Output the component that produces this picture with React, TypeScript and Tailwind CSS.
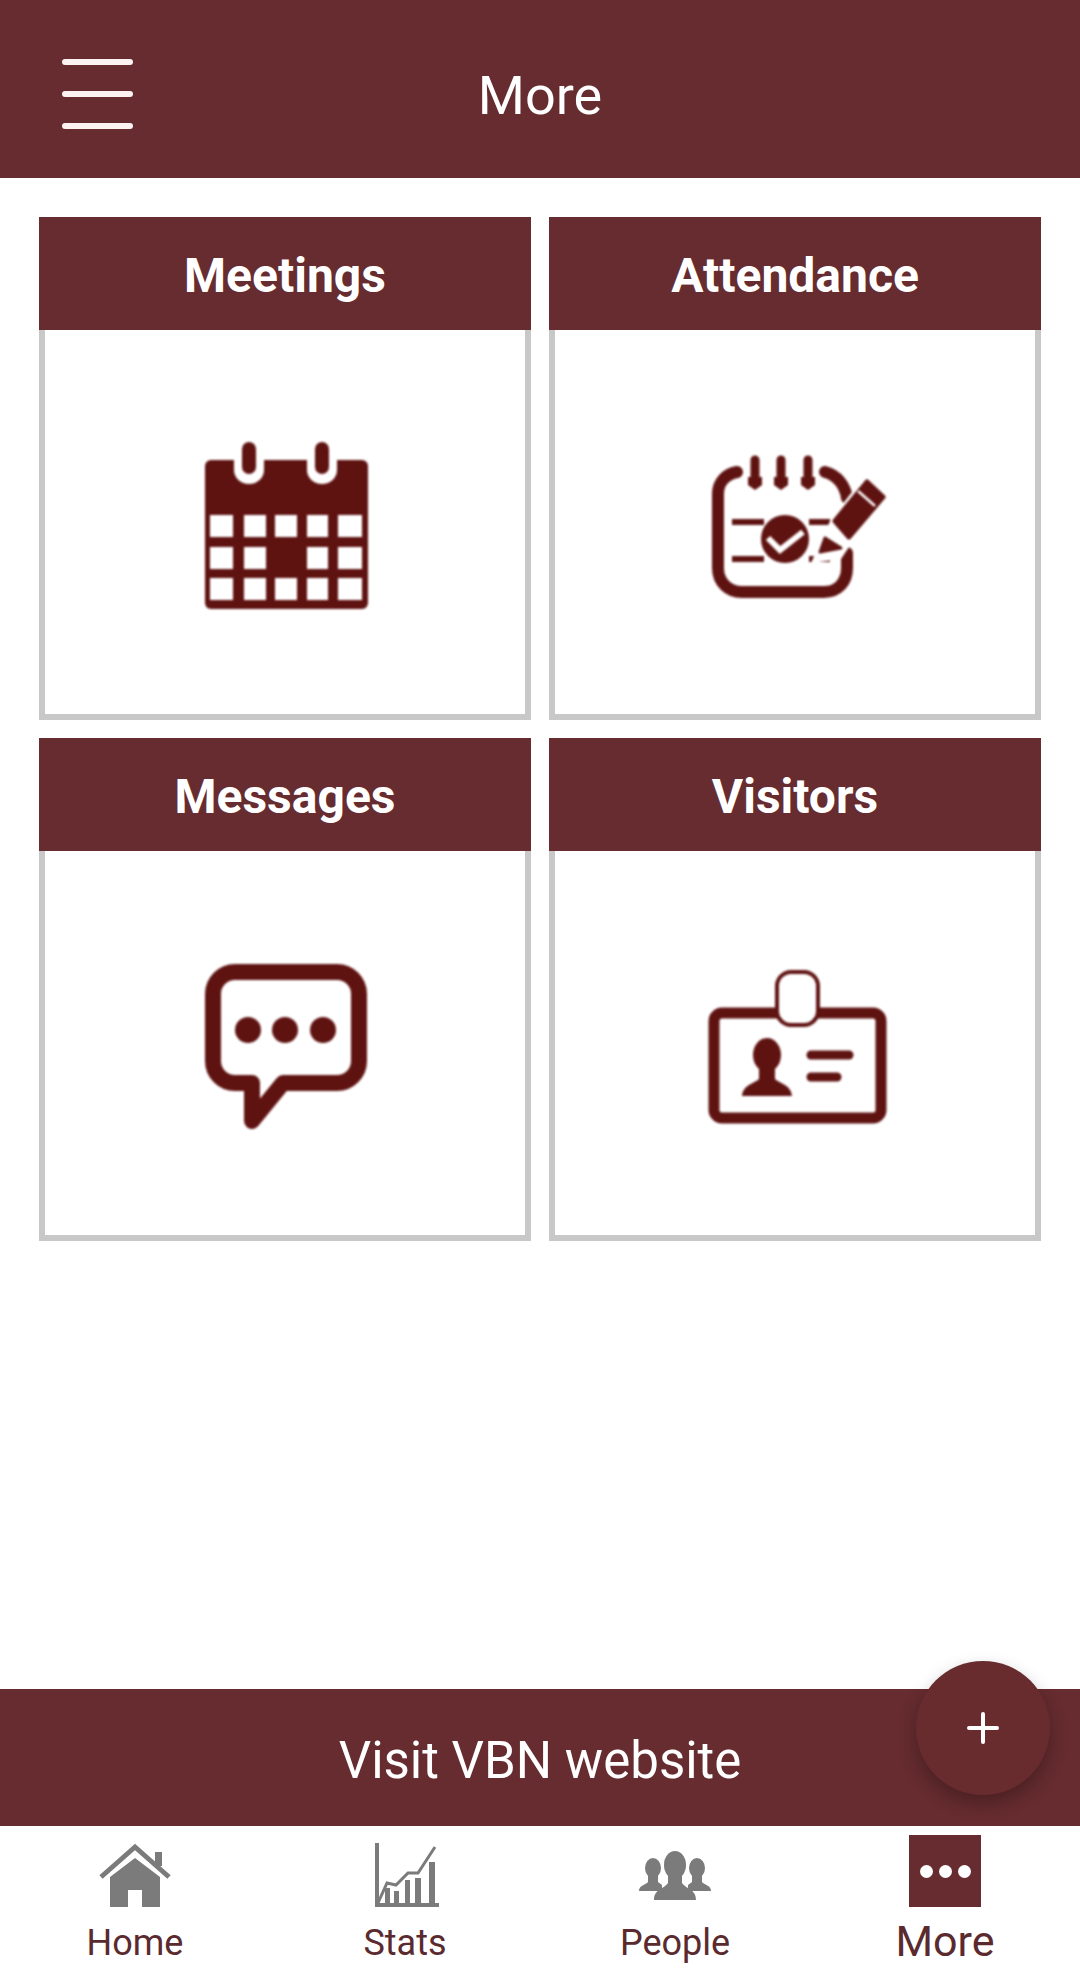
import type { ReactNode } from "react";

function CalendarIcon() {
  const rows = [103, 135, 166];
  const cols: [number, number][] = [
    [35, 23],
    [69, 22],
    [100, 22],
    [132, 21],
    [163, 24],
  ];
  return (
    <svg viewBox="0 0 220 220" className="h-[220px] w-[220px] blur-[1px]">
      <path d="M36 48H187a6 6 0 0 1 6 6V191a6 6 0 0 1-6 6H36a6 6 0 0 1-6-6V54a6 6 0 0 1 6-6Z" fill="#5f1311" />
      {[74, 147].map((x) => (
        <g key={x}>
          <path d={`M${x - 15} 44V58a15 14 0 0 0 30 0V44Z`} fill="#fff" />
          <rect x={x - 7} y={30} width={14} height={32} rx={7} fill="#5f1311" />
        </g>
      ))}
      {rows.map((y, r) =>
        cols.map(([x, w], c) =>
          r === 1 && c === 2 ? null : <rect key={`${r}-${c}`} x={x} y={y} width={w} height={22} fill="#fff" />
        )
      )}
    </svg>
  );
}

function AttendanceIcon() {
  return (
    <svg viewBox="0 0 220 220" className="h-[220px] w-[220px] blur-[1px]" fill="none" stroke="#5f1311">
      <path d="M52 60C41 62 33 70 33 82V156C33 170 43 180 57 180H139C153 180 162 170 162 156V141" strokeWidth="12" strokeLinecap="round" />
      <path d="M140 60C152 63 160 73 162 86" strokeWidth="12" strokeLinecap="round" />
      <g strokeWidth="9" strokeLinecap="round">
        <path d="M70 48V67" />
        <path d="M96 48V67" />
        <path d="M123 48V67" />
      </g>
      <g fill="#5f1311" stroke="none">
        <path d="M63 65H77V73L70 78L63 73Z" />
        <path d="M89 65H103V73L96 78L89 73Z" />
        <path d="M116 65H130V73L123 78L116 73Z" />
      </g>
      <g strokeWidth="6">
        <path d="M47 110H79" />
        <path d="M124 110H145" />
        <path d="M47 147H79" />
        <path d="M124 147H145" />
      </g>
      <circle cx="100" cy="127" r="24" fill="#5f1311" stroke="none" />
      <path d="M83 126L95 138L118 120" stroke="#fff" strokeWidth="6" />
      <path d="M146 107L181 62L208 85L168 129L156 147L126 151Z" fill="#fff" stroke="none" />
      <path d="M150 109L182 70L198 85L164 125Z" fill="#5f1311" stroke="#5f1311" strokeWidth="5" strokeLinejoin="round" />
      <path d="M135 140L140 126L156 136Z" fill="#5f1311" stroke="#5f1311" strokeWidth="3" strokeLinejoin="round" />
      <path d="M173 79L190 94" stroke="#fff" strokeWidth="2.5" />
    </svg>
  );
}

function MessageIcon() {
  return (
    <svg viewBox="0 0 220 220" className="h-[220px] w-[220px] blur-[1px]" fill="none">
      <path
        d="M60 39H162a22 22 0 0 1 22 22V128a22 22 0 0 1-22 22H108L77 188V150H60a22 22 0 0 1-22-22V61a22 22 0 0 1 22-22Z"
        stroke="#5f1311"
        strokeWidth="16"
        strokeLinejoin="round"
      />
      <circle cx="73" cy="97" r="13" fill="#5f1311" />
      <circle cx="110" cy="97" r="13" fill="#5f1311" />
      <circle cx="148" cy="97" r="13" fill="#5f1311" />
    </svg>
  );
}

function VisitorIcon() {
  return (
    <svg viewBox="0 0 220 220" className="h-[220px] w-[220px] blur-[1px]" fill="none">
      <rect x="29" y="80" width="167" height="105" rx="8" stroke="#5f1311" strokeWidth="11" />
      <rect x="92" y="39" width="41" height="53" rx="14" fill="#fff" stroke="#5f1311" strokeWidth="4" />
      <ellipse cx="82" cy="122" rx="14" ry="17" fill="#5f1311" />
      <path d="M74 134H90V146C96 151 106 152 107 163H57C58 152 68 151 74 146Z" fill="#5f1311" />
      <path d="M126 122H164" stroke="#5f1311" strokeWidth="9" strokeLinecap="round" />
      <path d="M126 144H152" stroke="#5f1311" strokeWidth="9" strokeLinecap="round" />
    </svg>
  );
}

function HomeIcon() {
  return (
    <svg viewBox="0 0 72 72" className="h-[72px] w-[72px] blur-[0.6px]" fill="#7b7b7b">
      <rect x="56" y="17" width="7" height="14" />
      <path d="M2 42L36 12L70 42" fill="none" stroke="#7b7b7b" strokeWidth="5" />
      <path d="M11 42L36 23L61 42V72H43V55H29V72H11Z" />
    </svg>
  );
}

function StatsIcon() {
  return (
    <svg viewBox="0 0 72 72" className="h-[72px] w-[72px] blur-[0.6px]" fill="#7b7b7b">
      <rect x="6" y="8" width="4" height="64" />
      <rect x="6" y="68" width="64" height="4" />
      <rect x="16" y="53" width="5" height="16" />
      <rect x="25" y="56" width="5" height="13" />
      <rect x="36" y="45" width="5" height="24" />
      <rect x="46" y="43" width="6" height="26" />
      <rect x="60" y="27" width="6" height="42" />
      <path d="M9 68L18 48L27 50L39 38L49 38L66 12" fill="none" stroke="#7b7b7b" strokeWidth="3" />
    </svg>
  );
}

function PeopleIcon() {
  return (
    <svg viewBox="0 0 72 72" className="h-[72px] w-[72px] blur-[0.6px]" fill="#7b7b7b">
      <ellipse cx="14" cy="33" rx="8" ry="10" />
      <path d="M9 40H19V47L23 50V56H0C0 50 7 50 9 47Z" />
      <ellipse cx="58" cy="33" rx="8" ry="10" />
      <path d="M53 40H63V47C65 50 72 50 72 56H49V50L53 47Z" />
      <ellipse cx="36" cy="30" rx="11" ry="14" />
      <path d="M29 38H43V48C47 54 57 54 57 65H15C15 54 25 54 29 48Z" />
    </svg>
  );
}

function MoreIcon() {
  return (
    <div className="flex h-[72px] w-[72px] items-center justify-center gap-[6px] bg-[#662c2f]">
      <span className="h-[13px] w-[13px] rounded-full bg-white" />
      <span className="h-[13px] w-[13px] rounded-full bg-white" />
      <span className="h-[13px] w-[13px] rounded-full bg-white" />
    </div>
  );
}

function Tile({ title, icon }: { title: string; icon: ReactNode }) {
  return (
    <div className="flex h-[503px] flex-col">
      <div className="flex h-[113px] items-center justify-center bg-[#662c2f] pt-[4px] text-[48px] font-bold text-white">
        {title}
      </div>
      <div className="flex flex-1 items-center justify-center border-[6px] border-t-0 border-[#c8c8c8] bg-white">
        {icon}
      </div>
    </div>
  );
}

function NavItem({ label, icon, active }: { label: string; icon: ReactNode; active?: boolean }) {
  return (
    <div className="flex flex-col items-center pt-[9px]">
      {icon}
      {active ? (
        <span className="mt-[9px] text-[43px] leading-[50px] text-[#5a2a2e]">{label}</span>
      ) : (
        <span className="mt-[15px] text-[36px] leading-[42px] text-[#5a2a2e]">{label}</span>
      )}
    </div>
  );
}

export default function App() {
  return (
    <div className="relative flex h-[1974px] w-[1080px] flex-col overflow-hidden bg-white font-['Roboto',sans-serif]">
      {/* Top bar */}
      <header className="grid h-[178px] grid-cols-[1fr_auto_1fr] items-center bg-[#662c2f] px-[62px] pt-[9px]">
        <div className="flex w-[71px] flex-col gap-[26px]">
          <span className="h-[6px] rounded-full bg-[#fdf3f3]" />
          <span className="h-[6px] rounded-full bg-[#fdf3f3]" />
          <span className="h-[6px] rounded-full bg-[#fdf3f3]" />
        </div>
        <h1 className="pt-[4px] text-[54px] font-normal text-white">More</h1>
      </header>

      {/* Tiles */}
      <main className="flex-1 px-[39px] pt-[39px]">
        <div className="grid grid-cols-2 gap-[18px]">
          <Tile title="Meetings" icon={<CalendarIcon />} />
          <Tile title="Attendance" icon={<AttendanceIcon />} />
          <Tile title="Messages" icon={<MessageIcon />} />
          <Tile title="Visitors" icon={<VisitorIcon />} />
        </div>
      </main>

      <div className="flex h-[137px] items-center justify-center bg-[#662c2f] pt-[8px] text-[51px] text-white">
        Visit VBN website
      </div>

      {/* Bottom nav */}
      <nav className="grid h-[148px] grid-cols-4">
        <NavItem label="Home" icon={<HomeIcon />} />
        <NavItem label="Stats" icon={<StatsIcon />} />
        <NavItem label="People" icon={<PeopleIcon />} />
        <NavItem label="More" icon={<MoreIcon />} active />
      </nav>

      {/* Floating button */}
      <button
        type="button"
        className="absolute left-[916px] top-[1661px] flex h-[134px] w-[134px] items-center justify-center rounded-full bg-[#682c2f] shadow-[0_8px_18px_rgba(0,0,0,0.28)]"
      >
        <span className="relative h-[32px] w-[32px]">
          <span className="absolute left-0 top-[14px] h-[4px] w-[32px] rounded-full bg-white" />
          <span className="absolute left-[14px] top-0 h-[32px] w-[4px] rounded-full bg-white" />
        </span>
      </button>
    </div>
  );
}
